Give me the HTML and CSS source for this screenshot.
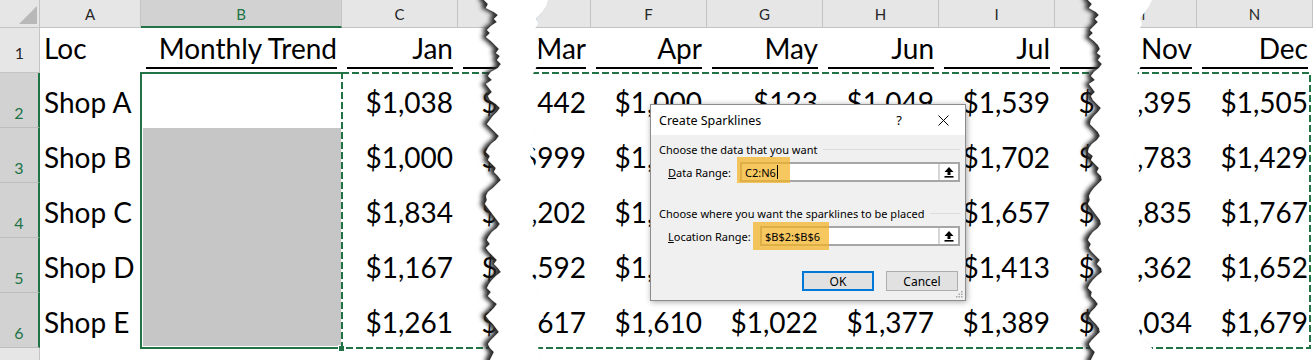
FILE: index.html
```html
<!DOCTYPE html>
<html>
<head>
<meta charset="utf-8">
<link rel="stylesheet" href="styles.css">
</head>
<body>
<div class="sheet">
  <div class="row colhdr">
    <div class="ch corner"><svg class="tri" width="20" height="20" viewBox="0 0 20 20"><path d="M19 1 L19 19 L1 19 Z" fill="#b8b8b8"/></svg></div>
    <div class="ch w-a">A</div>
    <div class="ch w-b sel">B</div>
    <div class="ch w-n">C</div>
    <div class="cut cut-l w-d"><div class="ch w-n nob">D</div></div>
    <div class="cut cut-r w-e"><div class="ch w-n">E</div></div>
    <div class="ch w-n">F</div>
    <div class="ch w-n">G</div>
    <div class="ch w-n">H</div>
    <div class="ch w-n">I</div>
    <div class="cut cut-l w-j"><div class="ch w-n nob">J</div></div>
    <div class="cut cut-r w-m"><div class="ch w-n">M</div></div>
    <div class="ch w-n">N</div>
  </div>

  <div class="row r1">
    <div class="rh">1</div>
    <div class="hc w-a"><div class="ul none left">Loc</div></div>
    <div class="hc w-b"><div class="ul">Monthly Trend</div></div>
    <div class="hc w-n"><div class="ul">Jan</div></div>
    <div class="cut cut-l w-d"><div class="hc w-n"><div class="ul">Feb</div></div></div>
    <div class="cut cut-r w-e"><div class="hc w-n"><div class="ul">Mar</div></div></div>
    <div class="hc w-n"><div class="ul">Apr</div></div>
    <div class="hc w-n"><div class="ul">May</div></div>
    <div class="hc w-n"><div class="ul">Jun</div></div>
    <div class="hc w-n"><div class="ul">Jul</div></div>
    <div class="cut cut-l w-j"><div class="hc w-n"><div class="ul">Aug</div></div></div>
    <div class="cut cut-r w-m"><div class="hc w-n"><div class="ul">Nov</div></div></div>
    <div class="hc w-n"><div class="ul">Dec</div></div>
  </div>

  <div class="row rd">
    <div class="rh sel">2</div>
    <div class="cell w-a left">Shop A</div>
    <div class="cell w-b"></div>
    <div class="cell w-n">$1,038</div>
    <div class="cut cut-l w-d"><div class="cell w-n">$1,371</div></div>
    <div class="cut cut-r w-e"><div class="cell w-n">$1,442</div></div>
    <div class="cell w-n">$1,000</div>
    <div class="cell w-n">$123</div>
    <div class="cell w-n">$1,049</div>
    <div class="cell w-n">$1,539</div>
    <div class="cut cut-l w-j"><div class="cell w-n">$1,218</div></div>
    <div class="cut cut-r w-m"><div class="cell w-n">$1,395</div></div>
    <div class="cell w-n">$1,505</div>
  </div>

  <div class="row rd">
    <div class="rh sel">3</div>
    <div class="cell w-a left">Shop B</div>
    <div class="cell w-b"></div>
    <div class="cell w-n">$1,000</div>
    <div class="cut cut-l w-d"><div class="cell w-n">$1,204</div></div>
    <div class="cut cut-r w-e"><div class="cell w-n">$999</div></div>
    <div class="cell w-n">$1,214</div>
    <div class="cell w-n">$1,350</div>
    <div class="cell w-n">$1,288</div>
    <div class="cell w-n">$1,702</div>
    <div class="cut cut-l w-j"><div class="cell w-n">$1,466</div></div>
    <div class="cut cut-r w-m"><div class="cell w-n">$1,783</div></div>
    <div class="cell w-n">$1,429</div>
  </div>

  <div class="row rd">
    <div class="rh sel">4</div>
    <div class="cell w-a left">Shop C</div>
    <div class="cell w-b"></div>
    <div class="cell w-n">$1,834</div>
    <div class="cut cut-l w-d"><div class="cell w-n">$1,093</div></div>
    <div class="cut cut-r w-e"><div class="cell w-n">$1,202</div></div>
    <div class="cell w-n">$1,145</div>
    <div class="cell w-n">$1,550</div>
    <div class="cell w-n">$1,720</div>
    <div class="cell w-n">$1,657</div>
    <div class="cut cut-l w-j"><div class="cell w-n">$1,318</div></div>
    <div class="cut cut-r w-m"><div class="cell w-n">$1,835</div></div>
    <div class="cell w-n">$1,767</div>
  </div>

  <div class="row rd">
    <div class="rh sel">5</div>
    <div class="cell w-a left">Shop D</div>
    <div class="cell w-b"></div>
    <div class="cell w-n">$1,167</div>
    <div class="cut cut-l w-d"><div class="cell w-n">$1,486</div></div>
    <div class="cut cut-r w-e"><div class="cell w-n">$1,592</div></div>
    <div class="cell w-n">$1,380</div>
    <div class="cell w-n">$1,265</div>
    <div class="cell w-n">$1,098</div>
    <div class="cell w-n">$1,413</div>
    <div class="cut cut-l w-j"><div class="cell w-n">$1,575</div></div>
    <div class="cut cut-r w-m"><div class="cell w-n">$1,362</div></div>
    <div class="cell w-n">$1,652</div>
  </div>

  <div class="row rd">
    <div class="rh sel">6</div>
    <div class="cell w-a left">Shop E</div>
    <div class="cell w-b"></div>
    <div class="cell w-n">$1,261</div>
    <div class="cut cut-l w-d"><div class="cell w-n">$1,530</div></div>
    <div class="cut cut-r w-e"><div class="cell w-n">$1,617</div></div>
    <div class="cell w-n">$1,610</div>
    <div class="cell w-n">$1,022</div>
    <div class="cell w-n">$1,377</div>
    <div class="cell w-n">$1,389</div>
    <div class="cut cut-l w-j"><div class="cell w-n">$1,127</div></div>
    <div class="cut cut-r w-m"><div class="cell w-n">$1,034</div></div>
    <div class="cell w-n">$1,679</div>
  </div>

  <div class="row r7">
    <div class="rh">7</div>
  </div>

  <!-- selection of B2:B6 -->
  <div class="selbox">
    <div class="sel-active"></div>
    <div class="sel-fill"></div>
  </div>
  <div class="handle"></div>

  <!-- marching ants around C2:N6 -->
  <svg class="ants" width="974" height="280" viewBox="0 0 974 280">
    <rect x="2" y="2" width="968" height="275" fill="none" stroke="#217346" stroke-width="2" stroke-dasharray="7 3"/>
  </svg>

  <!-- torn paper edges -->
  <svg class="tear tear1" width="100" height="360" viewBox="0 0 100 360">
    <defs>
      <filter id="sh1" x="-60%" y="-5%" width="220%" height="110%">
        <feGaussianBlur in="SourceAlpha" stdDeviation="2.3"/>
        <feOffset dx="-5" dy="0" result="b"/>
        <feFlood flood-color="#2a2a2a" flood-opacity="1"/>
        <feComposite in2="b" operator="in"/>
        <feMerge><feMergeNode/><feMergeNode in="SourceGraphic"/></feMerge>
      </filter>
    </defs>
    <polygon filter="url(#sh1)" fill="#fff" points="16,-6 16,0 20,4 18,8 26,12 30,15 26,19 29,22 23,26 19,30 22,33 18,37 23,41 27,45 31,49 28,53 32,56 29,60 33,64 30,68 23,72 20,76 24,80 18,84 21,88 24,92 20,96 22,100 28,104 32,108 29,112 25,116 22,120 19,124 23,128 27,132 31,136 28,140 23,144 20,148 18,152 22,156 20,160 24,164 28,168 26,172 30,176 33,180 29,184 25,188 20,192 18,196 19,200 17,204 20,208 23,212 26,216 29,220 32,224 29,228 24,232 21,236 19,240 22,244 18,248 21,252 25,256 29,260 26,264 30,268 33,272 28,276 24,280 21,284 19,288 23,292 20,296 24,300 29,304 26,308 22,312 18,316 21,320 25,324 28,328 31,332 27,336 23,340 20,344 22,348 26,352 24,356 22,360 22,366 70,366 70,360 75,354 70,348 72,342 67,336 71,330 68,324 76,318 73,312 77,306 74,300 70,294 66,288 69,282 64,276 67,270 63,264 66,258 68,252 64,246 61,240 65,234 62,228 66,222 63,216 67,210 64,204 61,198 65,192 63,186 67,180 64,174 68,168 65,162 62,156 66,150 63,144 67,138 65,132 69,126 66,120 70,114 67,108 65,102 68,96 64,90 67,84 63,78 66,72 69,66 70,60 71,54 70,48 71,42 68,36 66,30 70,24 68,18 74,12 78,6 80,0 80,-6"/>
  </svg>
  <svg class="tear tear2" width="100" height="360" viewBox="0 0 100 360">
    <defs>
      <filter id="sh2" x="-60%" y="-5%" width="220%" height="110%">
        <feGaussianBlur in="SourceAlpha" stdDeviation="2.3"/>
        <feOffset dx="-5" dy="0" result="b"/>
        <feFlood flood-color="#2a2a2a" flood-opacity="1"/>
        <feComposite in2="b" operator="in"/>
        <feMerge><feMergeNode/><feMergeNode in="SourceGraphic"/></feMerge>
      </filter>
    </defs>
    <polygon filter="url(#sh2)" fill="#fff" points="18,-6 18,0 22,4 19,8 26,12 29,15 25,19 28,22 24,26 20,30 23,33 19,37 24,41 28,45 30,49 27,53 31,56 28,60 32,64 29,68 24,72 21,76 25,80 19,84 22,88 25,92 21,96 23,100 27,104 31,108 28,112 24,116 21,120 20,124 24,128 28,132 30,136 27,140 22,144 19,148 18,152 23,156 21,160 25,164 29,168 27,172 31,176 32,180 28,184 24,188 21,192 19,196 20,200 18,204 21,208 24,212 27,216 30,220 31,224 28,228 23,232 20,236 18,240 21,244 19,248 22,252 26,256 30,260 27,264 31,268 32,272 27,276 23,280 20,284 18,288 22,292 21,296 25,300 28,304 25,308 21,312 19,316 22,320 26,324 29,328 30,332 26,336 22,340 19,344 21,348 25,352 23,356 21,360 21,366 80,366 80,360 84,354 82,348 76,342 71,336 69,330 66,324 70,318 73,312 75,306 71,300 68,294 65,288 68,282 66,276 69,270 67,264 70,258 66,252 64,246 67,240 70,234 66,228 69,222 66,216 70,210 67,204 65,198 68,192 66,186 69,180 66,174 70,168 67,162 64,156 68,150 65,144 68,138 66,132 69,126 66,120 70,114 68,108 66,102 69,96 66,90 69,84 66,78 68,72 71,66 72,60 73,54 71,48 73,42 71,36 69,30 72,24 70,18 75,12 79,6 82,0 82,-6"/>
  </svg>

  <!-- dialog -->
  <div class="dlg">
    <div class="dlg-title">
      <span class="dlg-name">Create Sparklines</span>
      <span class="dlg-help">?</span>
      <svg class="dlg-close" width="11" height="11" viewBox="0 0 11 11"><path d="M0.5 0.5 L10.5 10.5 M10.5 0.5 L0.5 10.5" stroke="#000" stroke-width="1"/></svg>
    </div>
    <div class="dlg-body">
      <div class="legend"><span>Choose the data that you want</span><i class="rule"></i></div>
      <div class="field">
        <span class="lbl lbl1"><u>D</u>ata Range:</span>
        <div class="inp">
          <span class="val">C2:N6<i class="caret"></i></span>
          <span class="pick"><svg width="10" height="12" viewBox="0 0 10 12"><path d="M5 1 L0.5 6 H3.5 V9 H6.5 V6 H9.5 Z" fill="#000"/><rect x="0.5" y="10" width="9" height="1.6" fill="#000"/></svg></span>
        </div>
      </div>
      <div class="legend l2"><span>Choose where you want the sparklines to be placed</span><i class="rule"></i></div>
      <div class="field">
        <span class="lbl lbl2"><u>L</u>ocation Range:</span>
        <div class="inp">
          <span class="val">$B$2:$B$6</span>
          <span class="pick"><svg width="10" height="12" viewBox="0 0 10 12"><path d="M5 1 L0.5 6 H3.5 V9 H6.5 V6 H9.5 Z" fill="#000"/><rect x="0.5" y="10" width="9" height="1.6" fill="#000"/></svg></span>
        </div>
      </div>
      <div class="btns">
        <span class="btn ok">OK</span>
        <span class="btn">Cancel</span>
      </div>
    </div>
    <div class="hl hl1"></div>
    <div class="hl hl2"></div>
    <svg class="grip" width="7" height="7" viewBox="0 0 7 7">
      <rect x="5" y="0" width="1.5" height="1.5" fill="#a8a8a8"/>
      <rect x="2.5" y="2.5" width="1.5" height="1.5" fill="#a8a8a8"/>
      <rect x="5" y="2.5" width="1.5" height="1.5" fill="#a8a8a8"/>
      <rect x="0" y="5" width="1.5" height="1.5" fill="#a8a8a8"/>
      <rect x="2.5" y="5" width="1.5" height="1.5" fill="#a8a8a8"/>
      <rect x="5" y="5" width="1.5" height="1.5" fill="#a8a8a8"/>
    </svg>
  </div>
</div>
</body>
</html>
```

FILE: styles.css
```css
html, body {
  margin: 0;
  padding: 0;
  background: #fff;
}

.sheet {
  position: relative;
  width: 1313px;
  height: 360px;
  overflow: hidden;
  font-family: Lato, "Noto Sans", sans-serif;
  color: #000;
}

.row {
  display: flex;
}

/* column widths */
.w-a { width: 101px; flex-shrink: 0; }
.w-b { width: 201px; flex-shrink: 0; }
.w-n { width: 116px; flex-shrink: 0; }
.w-d { width: 40px; flex-shrink: 0; }
.w-e { width: 93px; flex-shrink: 0; }
.w-j { width: 40px; flex-shrink: 0; }
.w-m { width: 102px; flex-shrink: 0; }

.cut {
  display: flex;
  overflow: hidden;
}
.cut-l { justify-content: flex-start; }
.cut-r { justify-content: flex-end; }

/* column header row */
.colhdr {
  height: 28px;
}
.ch {
  box-sizing: border-box;
  height: 28px;
  background: #e6e6e6;
  border-right: 1px solid #c4c4c4;
  border-bottom: 1px solid #c4c4c4;
  display: flex;
  justify-content: center;
  padding-top: 5px;
  font-size: 15px;
  color: #262626;
}
.ch.nob { border-right-color: transparent; }
.ch.corner {
  width: 40px;
  flex-shrink: 0;
  padding: 0;
  position: relative;
}
.tri {
  margin: 5px 0 0 16px;
}
.ch.sel {
  background: #d2d2d2;
  border-bottom: 2px solid #217346;
  color: #217346;
}

/* row headers */
.rh {
  box-sizing: border-box;
  width: 40px;
  flex-shrink: 0;
  background: #e6e6e6;
  border-right: 1px solid #c4c4c4;
  border-bottom: 1px solid #c4c4c4;
  display: flex;
  justify-content: center;
  align-items: center;
  font-size: 16px;
  color: #262626;
}
.r1 .rh { padding-top: 4px; }
.rh.sel {
  background: #d2d2d2;
  border-right: 2px solid #217346;
  border-bottom-color: #bdbdbd;
  color: #217346;
  align-items: flex-end;
  padding-bottom: 5px;
}

.r1 { height: 45px; }
.rd { height: 55px; }
.r7 { height: 40px; }
.r7 .rh { align-items: flex-start; padding-top: 9px; }

/* header cells in row 1 */
.hc {
  box-sizing: border-box;
  display: flex;
  padding: 0 5px 4px;
  font-size: 28px;
}
.ul {
  flex: 1;
  display: flex;
  align-items: center;
  justify-content: flex-end;
  border-bottom: 2px solid #000;
  white-space: nowrap;
}
.ul.none { border-bottom-color: transparent; }
.ul.left { justify-content: flex-start; margin-left: -1px; }

/* data cells */
.cell {
  box-sizing: border-box;
  display: flex;
  align-items: center;
  justify-content: flex-end;
  padding: 2px 5px 0;
  font-size: 28px;
  white-space: nowrap;
}
.cell.left {
  justify-content: flex-start;
  padding-left: 4px;
}

/* selection B2:B6 */
.selbox {
  position: absolute;
  left: 140px;
  top: 72px;
  width: 202px;
  height: 277px;
  box-sizing: border-box;
  border: 2px solid #217346;
  border-right: none;
  padding: 1px;
  display: flex;
  flex-direction: column;
}
.sel-active { height: 53px; }
.sel-fill { flex: 1; background: #c6c6c6; }
.handle {
  position: absolute;
  left: 338px;
  top: 345px;
  width: 5px;
  height: 5px;
  background: #217346;
  border: 1px solid #fff;
}

.ants {
  position: absolute;
  left: 340px;
  top: 71px;
}

.tear {
  position: absolute;
  top: 0;
}
.tear1 { left: 468px; }
.tear2 { left: 1070px; }

/* dialog */
.dlg {
  position: absolute;
  left: 650px;
  top: 104px;
  width: 316px;
  height: 197px;
  box-sizing: border-box;
  border: 1px solid #8c8c8c;
  background: #f0f0f0;
  box-shadow: 1px 1px 6px rgba(0, 0, 0, 0.35);
  font-family: "Noto Sans", "Open Sans", sans-serif;
  font-size: 11px;
  color: #000;
  display: flex;
  flex-direction: column;
}
.dlg-title {
  height: 30px;
  flex-shrink: 0;
  background: #fff;
  display: flex;
  align-items: center;
  padding-left: 8px;
  font-size: 12.5px;
}
.dlg-help {
  margin-left: auto;
  font-size: 13px;
}
.dlg-close {
  margin-left: 36px;
  margin-right: 16px;
}
.dlg-body {
  padding: 6px 5px 0 8px;
  display: flex;
  flex-direction: column;
}
.legend {
  display: flex;
  align-items: center;
  height: 16px;
  gap: 6px;
  white-space: nowrap;
}
.legend.l2 { margin-top: 23px; }
.rule {
  flex: 1;
  height: 1px;
  background: #dcdcdc;
}
.field {
  display: flex;
  align-items: center;
  height: 20px;
  margin-top: 5px;
  padding-left: 9px;
}
.lbl { flex-shrink: 0; white-space: nowrap; }
.lbl1 { width: 72px; }
.lbl2 { width: 92px; }
.inp {
  flex: 1;
  height: 20px;
  box-sizing: border-box;
  border: 2px solid #a6a6a6;
  background: #fff;
  display: flex;
}
.val {
  position: relative;
  z-index: 2;
  flex: 1;
  display: flex;
  align-items: center;
  padding-left: 3px;
}
.caret {
  width: 1px;
  height: 14px;
  background: #000;
  margin-left: 1px;
}
.pick {
  width: 20px;
  box-sizing: border-box;
  border-left: 2px solid #d6d6d6;
  display: flex;
  align-items: center;
  justify-content: center;
}
.btns {
  display: flex;
  justify-content: flex-end;
  gap: 12px;
  margin-top: 25px;
  padding-right: 2px;
}
.btn {
  width: 72px;
  height: 20px;
  box-sizing: border-box;
  border: 1px solid #adadad;
  background: #e1e1e1;
  display: flex;
  align-items: center;
  justify-content: center;
  font-size: 12px;
}
.btn.ok { border: 2px solid #0078d7; }
.hl {
  position: absolute;
  z-index: 1;
  background: rgba(244, 178, 35, 0.72);
}
.hl1 { left: 86px; top: 52px; width: 53px; height: 26px; }
.hl2 { left: 102px; top: 117px; width: 76px; height: 28px; }
.grip {
  position: absolute;
  right: 2px;
  bottom: 2px;
}
```
